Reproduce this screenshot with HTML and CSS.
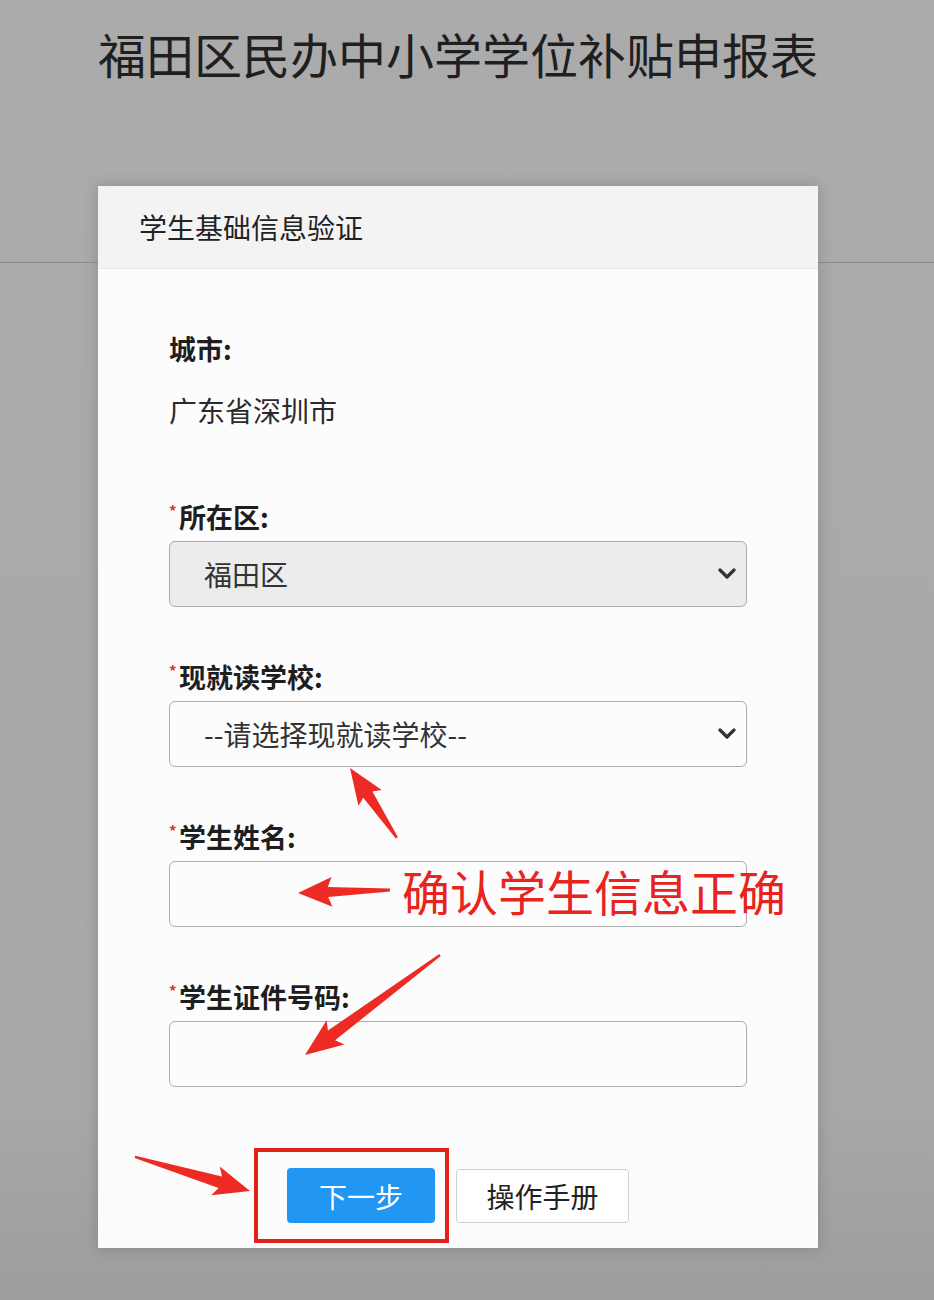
FILE: index.html
```html
<!DOCTYPE html>
<html lang="zh-CN">
<head>
<meta charset="utf-8">
<title>福田区民办中小学学位补贴申报表</title>
<link rel="stylesheet" href="styles.css">
</head>
<body>
<header class="page-header">
  <h1 class="title">福田区民办中小学学位补贴申报表</h1>
</header>

<div class="modal">
  <div class="modal-header">学生基础信息验证</div>
  <div class="modal-body">
    <div class="city">
      <div class="field-label">城市:</div>
      <div class="city-value">广东省深圳市</div>
    </div>

    <div class="field">
      <div class="field-label"><span class="req">*</span>所在区:</div>
      <div class="control control-disabled">
        <span>福田区</span>
        <svg class="chev" width="18" height="12" viewBox="0 0 18 12"><path d="M2 2 L9 9 L16 2" fill="none" stroke="#333" stroke-width="3.2" stroke-linecap="round" stroke-linejoin="round"/></svg>
      </div>
    </div>

    <div class="field">
      <div class="field-label"><span class="req">*</span>现就读学校:</div>
      <div class="control">
        <span>--请选择现就读学校--</span>
        <svg class="chev" width="18" height="12" viewBox="0 0 18 12"><path d="M2 2 L9 9 L16 2" fill="none" stroke="#333" stroke-width="3.2" stroke-linecap="round" stroke-linejoin="round"/></svg>
      </div>
    </div>

    <div class="field">
      <div class="field-label"><span class="req">*</span>学生姓名:</div>
      <div class="control"></div>
    </div>

    <div class="field">
      <div class="field-label"><span class="req">*</span>学生证件号码:</div>
      <div class="control"></div>
    </div>

    <div class="actions">
      <button class="btn btn-primary">下一步</button>
      <button class="btn btn-default">操作手册</button>
    </div>
  </div>
</div>

<div class="note">确认学生信息正确</div>

<svg class="annotations" width="934" height="1300" viewBox="0 0 934 1300">
  <!-- arrow 1: tail (397,838) -> tip (350,768) -->
  <g transform="translate(350,768) rotate(-123.9)">
    <polygon points="0,0 -36,-14 -32,-5.5 -84,-1.2 -84,1.2 -32,5.5 -36,14" fill="#ee2a24"/>
  </g>
  <!-- arrow 2: tail (390,890) -> tip (298,893) -->
  <g transform="translate(298,893) rotate(178.1)">
    <polygon points="0,0 -34,-15 -30,-5 -92,-1.5 -92,1.5 -30,5 -34,15" fill="#ee2a24"/>
  </g>
  <!-- arrow 3: tail (440,955) -> tip (305,1055) -->
  <g transform="translate(305,1055) rotate(143.5)">
    <polygon points="0,0 -38,-15 -33,-6 -168,-1.2 -168,1.2 -33,6 -38,15" fill="#ee2a24"/>
  </g>
  <!-- arrow 4: tail (135,1157) -> tip (250,1191) -->
  <g transform="translate(250,1191) rotate(16.5)">
    <polygon points="0,0 -36,-15 -31,-6 -120,-1.2 -120,1.2 -31,6 -36,15" fill="#ee2a24"/>
  </g>
  <rect x="256" y="1150" width="191" height="91" fill="none" stroke="#e3201b" stroke-width="4"/>
</svg>
</body>
</html>
```

FILE: styles.css
```css
html, body {
  margin: 0;
  padding: 0;
}

body {
  width: 934px;
  height: 1300px;
  overflow: hidden;
  background: linear-gradient(#ababab, #a9a8a9 85%, #9d9d9d);
  font-family: "Noto Sans CJK SC", "Noto Sans", sans-serif;
  color: #222;
}

.page-header {
  box-sizing: border-box;
  height: 263px;
  padding-left: 98px;
  border-bottom: 1px solid #8e8e8e;
}

.title {
  margin: 0;
  padding-top: 25px;
  font-size: 48px;
  line-height: 56px;
  font-weight: 400;
  color: #1f1f1f;
}

.modal {
  position: absolute;
  top: 186px;
  left: 98px;
  width: 720px;
  background: #fdfcfd;
  box-shadow: 0 0 14px rgba(0, 0, 0, 0.18);
}

.modal-header {
  height: 82px;
  line-height: 82px;
  padding-left: 41px;
  font-size: 28px;
  color: #222;
  background: #f4f3f4;
  border-bottom: 1px solid #e8e7e8;
}

.modal-body {
  padding: 64px 71px 25px;
}

.field-label {
  display: flex;
  font-size: 27px;
  line-height: 32px;
  font-weight: 700;
  color: #1e1e1e;
  margin-bottom: 8px;
}

.req {
  width: 10px;
  font-size: 15px;
  line-height: 20px;
  color: #e0302a;
  font-weight: 700;
}

.city-value {
  margin-top: 29px;
  font-size: 28px;
  line-height: 32px;
  color: #2a2a2a;
}

.city {
  margin-bottom: 75px;
}

.field + .field {
  margin-top: 54px;
}

.control {
  box-sizing: border-box;
  height: 66px;
  display: flex;
  align-items: center;
  justify-content: space-between;
  padding: 0 10px 0 34px;
  border: 1px solid #ababab;
  border-radius: 6px;
  background: #fdfcfd;
  font-size: 28px;
  color: #333;
}

.control-disabled {
  background: #ececec;
}

.chev {
  display: block;
}

.actions {
  margin-top: 81px;
  display: flex;
  justify-content: center;
  align-items: center;
  gap: 21px;
}

.btn {
  box-sizing: border-box;
  font-family: "Noto Sans CJK SC", "Noto Sans", sans-serif;
  font-size: 28px;
  border-radius: 4px;
  padding: 0;
  cursor: pointer;
}

.btn-primary {
  width: 148px;
  height: 55px;
  border: none;
  background: #2196f3;
  color: #fff;
}

.btn-default {
  width: 173px;
  height: 54px;
  border: 1px solid #cfcfcf;
  background: #fff;
  color: #222;
}

.note {
  position: absolute;
  left: 402px;
  top: 862px;
  font-size: 48px;
  line-height: 56px;
  font-weight: 400;
  color: #e8241e;
  white-space: nowrap;
}

.annotations {
  position: absolute;
  top: 0;
  left: 0;
  pointer-events: none;
}
```
